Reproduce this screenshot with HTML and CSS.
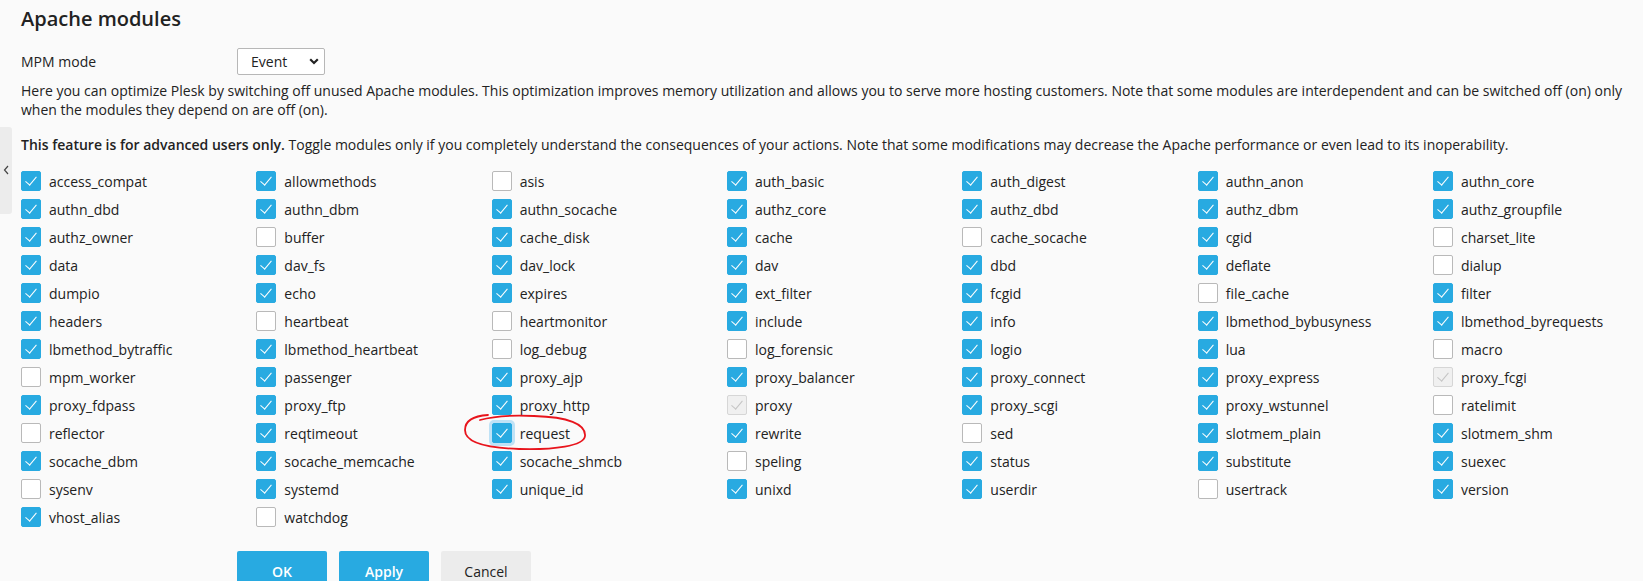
FILE: index.html
```html
<!DOCTYPE html>
<html lang="en">
<head>
<meta charset="utf-8">
<title>Apache modules</title>
<link rel="stylesheet" href="styles.css">
</head>
<body>
<div class="side-tab"><svg width="6" height="10" viewBox="0 0 6 10"><path d="M5 1 L1.5 5 L5 9" fill="none" stroke="#444" stroke-width="1.2"/></svg></div>
<main class="page">
  <h1 class="title">Apache modules</h1>
  <div class="form-row">
    <span class="form-label">MPM mode</span>
    <div class="select"><span>Event</span><svg width="10" height="7" viewBox="0 0 10 7"><path d="M1.2 1.3 L5 5 L8.8 1.3" fill="none" stroke="#222" stroke-width="2.2"/></svg></div>
  </div>
  <p class="hint">Here you can optimize Plesk by switching off unused Apache modules. This optimization improves memory utilization and allows you to serve more hosting customers. Note that some modules are interdependent and can be switched off (on) only when the modules they depend on are off (on).</p>
  <p class="warn"><b>This feature is for advanced users only.</b> Toggle modules only if you completely understand the consequences of your actions. Note that some modifications may decrease the Apache performance or even lead to its inoperability.</p>
  <div class="modules">
    <div class="mod"><span class="cb on"></span>access_compat</div>
    <div class="mod"><span class="cb on"></span>allowmethods</div>
    <div class="mod"><span class="cb"></span>asis</div>
    <div class="mod"><span class="cb on"></span>auth_basic</div>
    <div class="mod"><span class="cb on"></span>auth_digest</div>
    <div class="mod"><span class="cb on"></span>authn_anon</div>
    <div class="mod"><span class="cb on"></span>authn_core</div>

    <div class="mod"><span class="cb on"></span>authn_dbd</div>
    <div class="mod"><span class="cb on"></span>authn_dbm</div>
    <div class="mod"><span class="cb on"></span>authn_socache</div>
    <div class="mod"><span class="cb on"></span>authz_core</div>
    <div class="mod"><span class="cb on"></span>authz_dbd</div>
    <div class="mod"><span class="cb on"></span>authz_dbm</div>
    <div class="mod"><span class="cb on"></span>authz_groupfile</div>

    <div class="mod"><span class="cb on"></span>authz_owner</div>
    <div class="mod"><span class="cb"></span>buffer</div>
    <div class="mod"><span class="cb on"></span>cache_disk</div>
    <div class="mod"><span class="cb on"></span>cache</div>
    <div class="mod"><span class="cb"></span>cache_socache</div>
    <div class="mod"><span class="cb on"></span>cgid</div>
    <div class="mod"><span class="cb"></span>charset_lite</div>

    <div class="mod"><span class="cb on"></span>data</div>
    <div class="mod"><span class="cb on"></span>dav_fs</div>
    <div class="mod"><span class="cb on"></span>dav_lock</div>
    <div class="mod"><span class="cb on"></span>dav</div>
    <div class="mod"><span class="cb on"></span>dbd</div>
    <div class="mod"><span class="cb on"></span>deflate</div>
    <div class="mod"><span class="cb"></span>dialup</div>

    <div class="mod"><span class="cb on"></span>dumpio</div>
    <div class="mod"><span class="cb on"></span>echo</div>
    <div class="mod"><span class="cb on"></span>expires</div>
    <div class="mod"><span class="cb on"></span>ext_filter</div>
    <div class="mod"><span class="cb on"></span>fcgid</div>
    <div class="mod"><span class="cb"></span>file_cache</div>
    <div class="mod"><span class="cb on"></span>filter</div>

    <div class="mod"><span class="cb on"></span>headers</div>
    <div class="mod"><span class="cb"></span>heartbeat</div>
    <div class="mod"><span class="cb"></span>heartmonitor</div>
    <div class="mod"><span class="cb on"></span>include</div>
    <div class="mod"><span class="cb on"></span>info</div>
    <div class="mod"><span class="cb on"></span>lbmethod_bybusyness</div>
    <div class="mod"><span class="cb on"></span>lbmethod_byrequests</div>

    <div class="mod"><span class="cb on"></span>lbmethod_bytraffic</div>
    <div class="mod"><span class="cb on"></span>lbmethod_heartbeat</div>
    <div class="mod"><span class="cb"></span>log_debug</div>
    <div class="mod"><span class="cb"></span>log_forensic</div>
    <div class="mod"><span class="cb on"></span>logio</div>
    <div class="mod"><span class="cb on"></span>lua</div>
    <div class="mod"><span class="cb"></span>macro</div>

    <div class="mod"><span class="cb"></span>mpm_worker</div>
    <div class="mod"><span class="cb on"></span>passenger</div>
    <div class="mod"><span class="cb on"></span>proxy_ajp</div>
    <div class="mod"><span class="cb on"></span>proxy_balancer</div>
    <div class="mod"><span class="cb on"></span>proxy_connect</div>
    <div class="mod"><span class="cb on"></span>proxy_express</div>
    <div class="mod"><span class="cb dis"></span>proxy_fcgi</div>

    <div class="mod"><span class="cb on"></span>proxy_fdpass</div>
    <div class="mod"><span class="cb on"></span>proxy_ftp</div>
    <div class="mod"><span class="cb on"></span>proxy_http</div>
    <div class="mod"><span class="cb dis"></span>proxy</div>
    <div class="mod"><span class="cb on"></span>proxy_scgi</div>
    <div class="mod"><span class="cb on"></span>proxy_wstunnel</div>
    <div class="mod"><span class="cb"></span>ratelimit</div>

    <div class="mod"><span class="cb"></span>reflector</div>
    <div class="mod"><span class="cb on"></span>reqtimeout</div>
    <div class="mod marked"><span class="cb on focus"></span>request<svg class="scribble" width="126" height="40" viewBox="0 0 126 40"><path d="M24 3 C 8 4, 1 10, 1 18 C 1 30, 22 36, 55 37 C 90 38, 120 34, 121 24 C 122 12, 104 5, 70 4 C 50 3, 30 4, 16 8" fill="none" stroke="#e8141c" stroke-width="1.8" stroke-linecap="round"/></svg></div>
    <div class="mod"><span class="cb on"></span>rewrite</div>
    <div class="mod"><span class="cb"></span>sed</div>
    <div class="mod"><span class="cb on"></span>slotmem_plain</div>
    <div class="mod"><span class="cb on"></span>slotmem_shm</div>

    <div class="mod"><span class="cb on"></span>socache_dbm</div>
    <div class="mod"><span class="cb on"></span>socache_memcache</div>
    <div class="mod"><span class="cb on"></span>socache_shmcb</div>
    <div class="mod"><span class="cb"></span>speling</div>
    <div class="mod"><span class="cb on"></span>status</div>
    <div class="mod"><span class="cb on"></span>substitute</div>
    <div class="mod"><span class="cb on"></span>suexec</div>

    <div class="mod"><span class="cb"></span>sysenv</div>
    <div class="mod"><span class="cb on"></span>systemd</div>
    <div class="mod"><span class="cb on"></span>unique_id</div>
    <div class="mod"><span class="cb on"></span>unixd</div>
    <div class="mod"><span class="cb on"></span>userdir</div>
    <div class="mod"><span class="cb"></span>usertrack</div>
    <div class="mod"><span class="cb on"></span>version</div>

    <div class="mod"><span class="cb on"></span>vhost_alias</div>
    <div class="mod"><span class="cb"></span>watchdog</div>
  </div>
  <div class="actions">
    <button class="btn primary">OK</button>
    <button class="btn primary">Apply</button>
    <button class="btn">Cancel</button>
  </div>
</main>
</body>
</html>
```

FILE: styles.css
```css
html, body {
  margin: 0;
  padding: 0;
  background: #fafafa;
}
body {
  font-family: "Open Sans", "Liberation Sans", sans-serif;
  font-size: 14px;
  color: #222;
  overflow: hidden;
}
.side-tab {
  position: absolute;
  left: 0;
  top: 127px;
  width: 12px;
  height: 87px;
  background: #ececec;
  border-radius: 0 3px 3px 0;
  display: flex;
  justify-content: center;
  padding-top: 38px;
  box-sizing: border-box;
}
.page {
  padding: 5px 0 0 21px;
}
.title {
  margin: 0;
  font-size: 20px;
  font-weight: 600;
  line-height: 28px;
  color: #222;
}
.form-row {
  display: flex;
  align-items: center;
  margin-top: 15px;
  height: 27px;
}
.form-label {
  width: 216px;
  line-height: 19px;
}
.select {
  width: 88px;
  height: 27px;
  box-sizing: border-box;
  border: 1px solid #b7b7b7;
  border-radius: 2px;
  background: #fff;
  display: flex;
  align-items: center;
  justify-content: space-between;
  padding: 0 5px 0 13px;
}
.hint {
  margin: 6px 0 0 0;
  line-height: 19px;
}
.warn {
  margin: 16px 0 0 0;
  line-height: 19px;
}
.warn b {
  font-weight: 600;
}
.modules {
  margin-top: 13px;
  display: grid;
  grid-template-columns: repeat(6, 235.33px) 1fr;
  grid-auto-rows: 28px;
}
.mod {
  display: flex;
  align-items: center;
  gap: 8px;
  white-space: nowrap;
}
.marked {
  position: relative;
}
.scribble {
  position: absolute;
  left: -28px;
  top: -7px;
  pointer-events: none;
}
.cb {
  flex: none;
  position: relative;
  width: 20px;
  height: 20px;
  box-sizing: border-box;
  border: 1px solid #b9b9b9;
  border-radius: 2px;
  background: #fff;
}
.cb.on {
  background: #28aae1;
  border-color: #28aae1;
}
.cb.on::after, .cb.dis::after {
  content: "";
  position: absolute;
  left: 6px;
  top: 2px;
  width: 5px;
  height: 10px;
  border: solid #fff;
  border-width: 0 1.8px 1.8px 0;
  transform: rotate(40deg);
}
.cb.dis {
  background: #f0f0f0;
  border-color: #d6d6d6;
}
.cb.dis::after {
  border-color: #c4c4c4;
}
.cb.focus {
  box-shadow: 0 0 0 3px #bfe2f6;
}
.actions {
  display: flex;
  gap: 12px;
  margin: 20px 0 0 216px;
}
.btn {
  font-family: inherit;
  font-size: 14px;
  height: 40px;
  min-width: 90px;
  padding: 0 18px;
  border: none;
  border-radius: 2px;
  background: #ececec;
  color: #222;
}
.btn.primary {
  background: #28aae1;
  color: #fff;
  font-weight: 600;
}
```
